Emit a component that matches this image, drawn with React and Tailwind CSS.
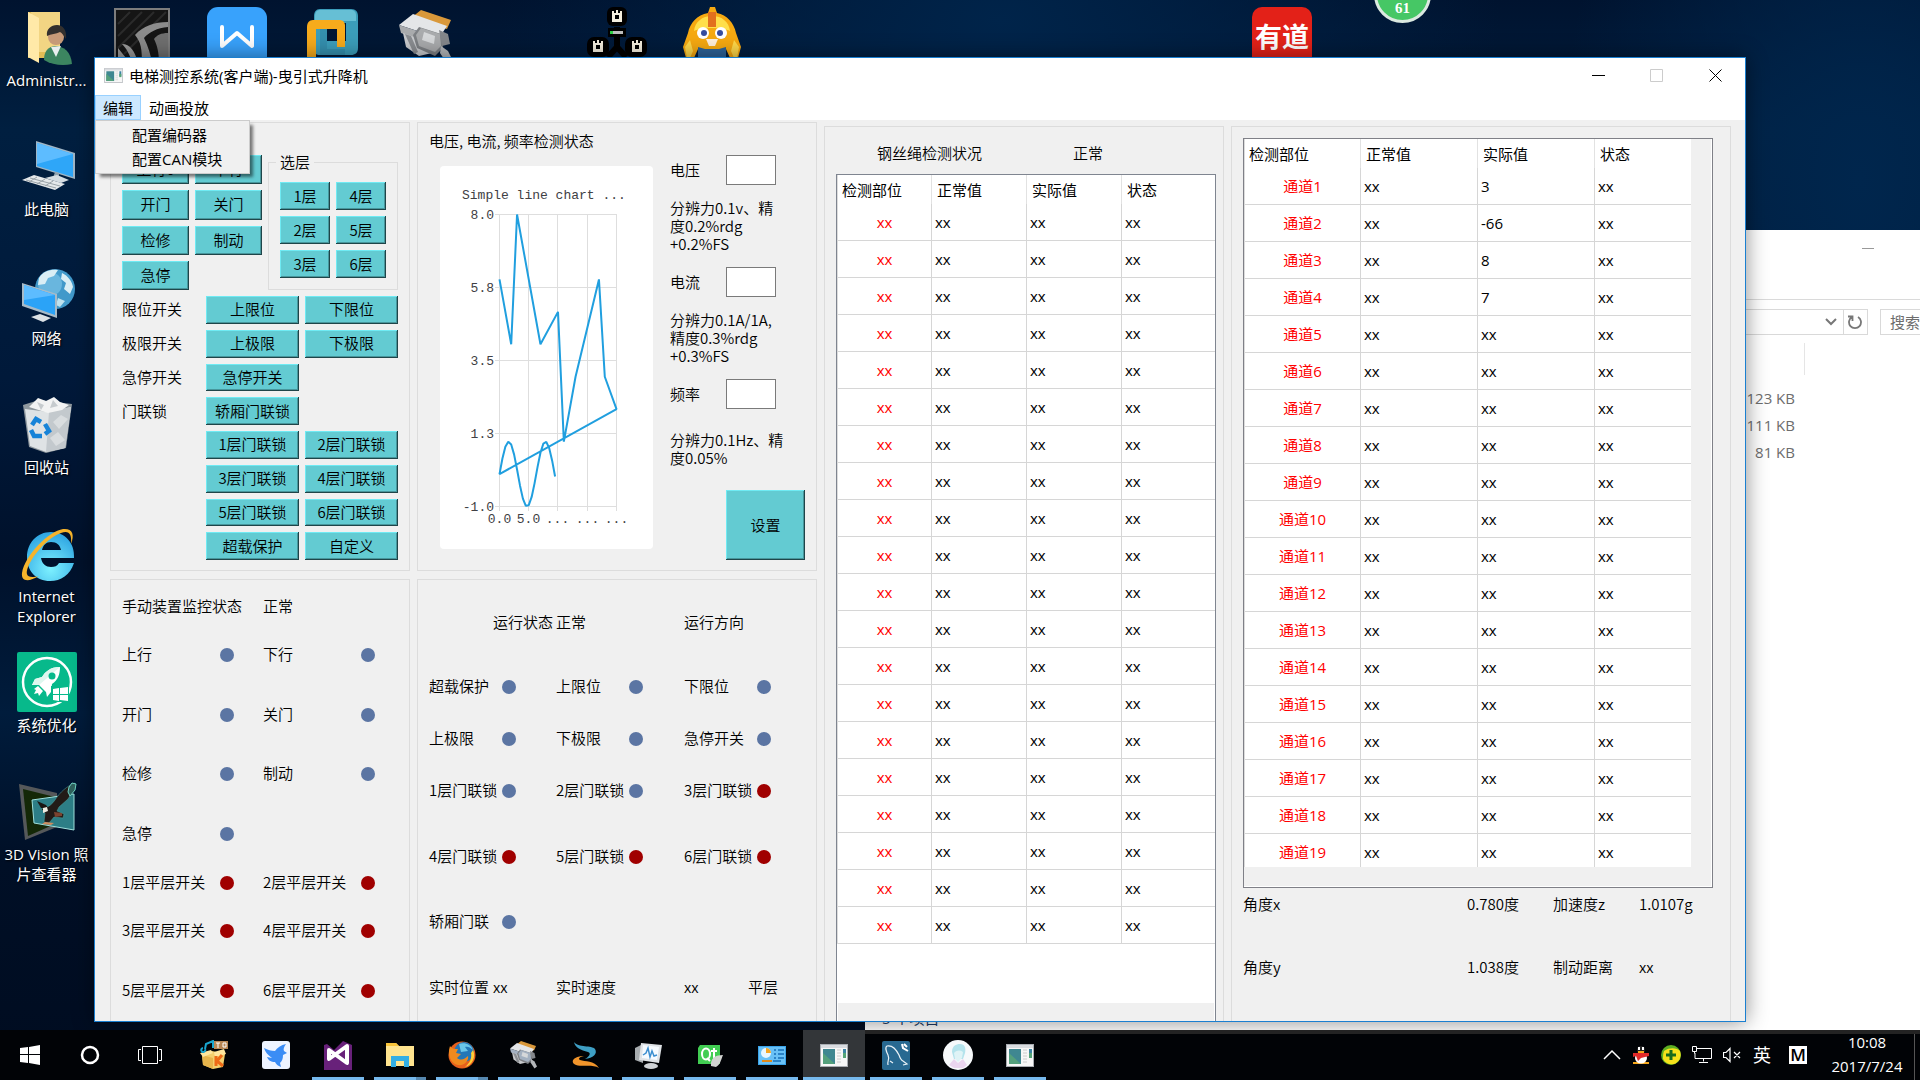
import React from "react";

const SONG = "font-['Noto_Sans_CJK_SC','Noto_Sans',sans-serif] font-[350]";
const UI = "font-['Open_Sans','Noto_Sans_CJK_SC',sans-serif]";

/* ---------- desktop icons ---------- */

const UserFolderIcon = () => (
  <svg width="60" height="60" viewBox="0 0 60 60" className="block">
    <path d="M11 5h32v46H11z" fill="#e3bd56" />
    <path d="M14 5h29v40H20z" fill="#f2d583" />
    <path d="M11 5l11 6v45l-11-6z" fill="#ffe9a8" />
    <path d="M27 53c0-9 4-13 11-14 9 0 16 6 17 18-9 2-20 1-28-4z" fill="#3c8560" />
    <path d="M34 40l5 10 5-11z" fill="#e9eef0" />
    <circle cx="39" cy="30" r="8" fill="#c79a78" />
    <path d="M30 29c-1-7 4-11 10-11s10 5 9 14c-2-3-4-6-6-7-4 2-9 2-13 4z" fill="#33302e" />
  </svg>
);

const ComputerIcon = () => (
  <svg width="60" height="60" viewBox="0 0 60 60" className="block">
    <path d="M19 5l39 12v26L19 31z" fill="#9fb6c6" />
    <path d="M20 7l36 11v23L20 30z" fill="#2ea6f8" />
    <path d="M20 7l36 11-36 10z" fill="#5dbcff" />
    <path d="M38 36l4 1v6l-6-1z" fill="#8fa1ad" />
    <path d="M28 42l12-3 12 5-8 3z" fill="#d5dde2" />
    <path d="M5 44l12-5 31 9-10 6z" fill="#e4e8ea" />
    <path d="M9 44l30 8M13 42l30 8M12 46l8-5M20 48l8-5M28 50l8-5" stroke="#9aa3a8" strokeWidth="1" />
  </svg>
);

const NetworkIcon = () => (
  <svg width="60" height="60" viewBox="0 0 60 60" className="block">
    <circle cx="38" cy="24" r="20" fill="#4199ca" />
    <circle cx="33" cy="19" r="12" fill="#69b6de" />
    <path d="M22 13c5-8 13-9 19-8l-4 6-6 2-3 6-7 1zM45 8c6 3 10 8 11 14l-3 7-6-5 2-6-5-4z" fill="#d9eef5" />
    <path d="M41 33l7 3-5 6-4-2z" fill="#bfe2ee" />
    <path d="M5 18l35 11v24L5 41z" fill="#a7bac7" />
    <path d="M7 20l31 10v20L7 39z" fill="#2ba3f7" />
    <path d="M7 20l31 10L7 35z" fill="#5dbcff" />
    <path d="M14 52l9-3 11 4-8 4z" fill="#dce2e6" />
  </svg>
);

const BinIcon = () => (
  <svg width="60" height="60" viewBox="0 0 60 60" className="block">
    <path d="M6 11l16-5 33 4-6 44-20 5-17-6z" fill="#8f989e" />
    <path d="M8 15l24 3 22-5-6 41-19 4-16-6z" fill="#dfe3e5" />
    <path d="M32 18l22-5-6 41-19 4z" fill="#c3c9cd" />
    <path d="M12 13l9-9 8 3 8-4 6 5 9 3-7 5-14 3z" fill="#f2f3f3" />
    <path d="M20 8l7 3-3 5zM36 6l5 6-8 2z" fill="#c6cbce" />
    <path d="M36 28l8-7 7 4-9 10zM33 44l8-6 7 8-9 6z" fill="#d9dddf" />
    <g fill="none" stroke="#1683d8" strokeWidth="4.500">
      <path d="M15 31l4-6 5 3" />
      <path d="M28 30l4 7-4 3" />
      <path d="M25 42h-8l-3-6" />
    </g>
  </svg>
);

const ExplorerEIcon = () => (
  <svg width="60" height="60" viewBox="0 0 60 60" className="block">
    <defs>
      <radialGradient id="ieg" cx="0.5" cy="0.75" r="0.8">
        <stop offset="0" stopColor="#7df1ff" />
        <stop offset="1" stopColor="#289fe0" />
      </radialGradient>
    </defs>
    <path
      d="M34 9c14 0 24 11 23 26H24c1 6 5 9 10 9 4 0 6-1 8-4h15c-4 12-13 18-24 18C19 58 10 48 10 34S20 9 34 9zm-9 18h19c-1-5-4-8-10-8-5 0-8 3-9 8z"
      fill="url(#ieg)"
    />
    <path
      d="M54 21C58 11 55 5 46 6 32 8 8 32 5 50c-1 9 7 9 17 3C10 56 8 52 11 44 17 30 32 14 44 10c8-3 11 1 10 11z"
      fill="#f5b32b"
    />
  </svg>
);

const RocketIcon = () => (
  <svg width="60" height="60" viewBox="0 0 60 60" className="block">
    <rect width="60" height="60" rx="2" fill="#07b98b" />
    <circle cx="30" cy="30" r="24" fill="none" stroke="#fff" strokeWidth="2.5" />
    <path d="M43 15c-10 0-15 5-18 10l-7 2-3 6h7l7 7 1 5 4-5 1-8c6-4 8-10 8-17z" fill="#fff" />
    <path d="M43 15c-10 0-15 5-18 10l-7 2-3 6h7z" fill="#dff7ef" />
    <circle cx="35" cy="24" r="3.5" fill="#07b98b" />
    <path d="M21 34l-4 3 2 1-2 4 4-1 1 3 4-5z" fill="#fff" />
    <path d="M34 34h18v16H34z" fill="#07b98b" />
    <path d="M36 37l6-1v6h-6zM43 36l8-1v7h-8zM36 43h6v6l-6-1zM43 43h8v6l-8-1z" fill="#fff" />
  </svg>
);

const EagleIcon = () => (
  <svg width="60" height="60" viewBox="0 0 60 60" className="block">
    <path d="M2 3l38 9v34L8 59z" fill="#55585a" />
    <path d="M6 8l32 8v27L11 55z" fill="#142807" />
    <path d="M15 19l42-6v36l-40-7z" fill="#2d7e86" stroke="#9fe0dc" strokeWidth="1" />
    <path d="M28 27c5-2 7-4 10-8 5-8 12-14 20-17l-2 8-5 8-9 8-2 4 7 3-1 4-9-1-5 6-5-1 1-9-4-4z" fill="#221b17" stroke="#4da39f" strokeWidth="0.500" />
    <path d="M32 28l-8-1-4-7 9 4z" fill="#1b1512" />
    <path d="M26 27l4-1 1 4-5 2z" fill="#f0ece0" />
    <path d="M52 6l3-4 4 1-1 6-5 6-2-4z" fill="#2f625d" stroke="#71d3c4" strokeWidth="1" />
    <path d="M37 31l8 1v3l-7 1z" fill="#7b4330" />
    <path d="M28 41l9 1-3 2-9-1z" fill="#cf8b5d" />
  </svg>
);

const NvidiaIcon = () => (
  <svg width="56" height="56" viewBox="0 0 56 56" className="block">
    <rect x="1" y="1" width="54" height="54" fill="#151515" stroke="#7d7d7d" strokeWidth="2" />
    <path d="M4 16L16 4M4 28L28 4M4 40L40 4M10 46L52 4" stroke="#2b2b2b" strokeWidth="2" />
    <path d="M54 14c-14 0-25 4-33 13 6 7 7 14 7 29h10c-1-9-4-18-8-26 5-6 13-10 24-11z" fill="#8b8b8b" />
    <path d="M54 25c-7 0-11 2-14 6 3 6 5 13 5 24h9z" fill="#6f6f6f" />
    <path d="M4 40l12 15H4zM8 36c8 0 13 7 16 19h-6c-2-8-5-14-10-19z" fill="#999" />
  </svg>
);

const WpsIcon = () => (
  <svg width="60" height="60" viewBox="0 0 60 60" className="block">
    <rect width="60" height="60" rx="11" fill="#38a2fc" />
    <path d="M15 20v19l15-13 15 13V20" fill="none" stroke="#fff" strokeWidth="4" strokeLinejoin="round" strokeLinecap="round" />
  </svg>
);

const VmIcon = () => (
  <svg width="52" height="50" viewBox="0 0 52 50" className="block">
    <path d="M13 0h31c5 0 7 3 7 7v32c0 5-3 7-7 7H13c-4 0-6-2-6-6V7c0-4 2-7 6-7zm7 14v18h19V14z" fill="#3b9dba" fillRule="evenodd" />
    <path d="M13 1h31c3 0 5 2 5 5v6H8V7c0-4 2-6 5-6z" fill="#66bfd5" />
    <path d="M6 11h26c4 0 6 2 6 6v21H30V20H9v30H0V18c0-4 2-7 6-7z" fill="#f7ab1c" />
    <path d="M13 20h7v20h18v6H13z" fill="#348fae" />
  </svg>
);

const PlugIcon = ({ size = 60, tone = "#a9abad" }) => (
  <svg width={size} height={size} viewBox="0 0 60 60" className="block">
    <path d="M14 10l10-8 30 10-4 9z" fill="#d9983a" />
    <path d="M2 17l14-11 34 12-8 12z" fill="#e4e6e8" />
    <path d="M2 17l40 13-3 8L4 25z" fill={tone} />
    <path d="M6 25l31 11-2 9-13 3-13-9z" fill="#c8cacd" />
    <path d="M22 19l22 7 2 14-8 8-18-8-4-13z" fill="#7d8084" />
    <path d="M24 20l19 6 1 12-6 6-16-6-3-11z" fill={tone} />
    <path d="M27 24l11 4-1 8-12-4z" fill="#d6d8da" />
    <path d="M42 22l9 4 2 10-8 2z" fill="#84878b" />
    <path d="M44 38l7 5 5 10-5 4-8-12z" fill="#b3b6b9" />
    <path d="M8 26l9 20 4-2-7-16z" fill="#8a8d91" />
  </svg>
);

const RobotsIcon = () => (
  <svg width="62" height="52" viewBox="0 0 62 52" className="block">
    <path d="M31 20v20M31 40l-9 10M31 40l9 10" stroke="#000" strokeWidth="6" />
    <rect x="21" y="0" width="20" height="19" rx="6" fill="#000" />
    <rect x="1" y="30" width="22" height="20" rx="7" fill="#000" />
    <rect x="39" y="30" width="22" height="20" rx="7" fill="#000" />
    <rect x="22" y="21" width="18" height="9" fill="#000" />
    <path d="M24 24h13v3H24z" fill="#bdbdbd" />
    <path d="M24 24h3v3h-3z" fill="#2fd046" />
    <g fill="#f4eede">
      <path d="M26 4h2v2h2V3h2v3h2V4h2v11H26zM29 8v4h4V8z" fillRule="evenodd" />
      <path d="M7 34h2v2h2v-3h2v3h2v-2h2v11H7zM10 38v4h4v-4z" fillRule="evenodd" />
      <path d="M46 34h2v2h2v-3h2v3h2v-2h2v11H46zM49 38v4h4v-4z" fillRule="evenodd" />
    </g>
  </svg>
);

const MascotIcon = () => (
  <svg width="60" height="52" viewBox="0 0 60 52" className="block">
    <path d="M28 0h5l2 6c10 2 17 10 19 20l5 14-3 11h-8l-4-9H16l-4 9H4L1 40l5-14C8 16 15 8 26 6z" fill="#f6a911" />
    <path d="M12 24c1-9 8-15 18-15s17 6 18 15c-8-4-28-4-36 0z" fill="#ffdf4a" />
    <path d="M26 5h8v15h-8z" fill="#e2701e" />
    <path d="M16 40l7 2h14l7-2v12H16z" fill="#2d6399" />
    <circle cx="21" cy="26" r="6" fill="#fff" />
    <circle cx="39" cy="26" r="6" fill="#fff" />
    <circle cx="22" cy="26" r="3" fill="#364c9e" />
    <circle cx="38" cy="26" r="3" fill="#364c9e" />
    <path d="M24 32h12l-3 7h-6z" fill="#fff0dc" />
    <path d="M3 40l5-7 3 11-3 7H5zM57 40l-5-7-3 11 3 7h3z" fill="#ffd84a" />
  </svg>
);

/* ---------- taskbar icons ---------- */

const AppWindowIcon = ({ w = 28, h = 23 }) => (
  <svg width={w} height={h} viewBox="0 0 28 23" className="block">
    <rect x="0.5" y="0.5" width="27" height="22" fill="#f7f7f7" stroke="#a9adb2" />
    <path d="M1 1h26v3H1z" fill="#d9dce0" />
    <rect x="3" y="5" width="12" height="15" fill="#3f8791" />
    <path d="M3 20V9l12 11z" fill="#54a07c" />
    <path d="M17 6h4M17 9h4M17 12h4M17 15h4M17 18h4" stroke="#ccc" />
    <rect x="23" y="5" width="3" height="8" fill="#3b84a4" />
    <rect x="23" y="9" width="3" height="5" fill="#55a376" />
  </svg>
);

const TASKS = [
  {
    name: "音乐盒",
    bar: 0,
    icon: (
      <svg width="30" height="30" viewBox="0 0 30 30">
        <path d="M3 15l10-4 13 3-2 13-10 2-10-4z" fill="#f4cf6d" />
        <path d="M3 15l11 3v11L4 25z" fill="#e7b54c" />
        <path d="M1 13l11-3 2 3-10 4zM15 12l10-3 2 5-11 3z" fill="#ffe69d" />
        <path d="M17 16v10M18 21l5-6M18 21l6 5" stroke="#ee6a16" strokeWidth="3" />
        <path d="M6 9l1-5 7-3v7M6 9a2 2 0 1 1-2-1" stroke="#19a6cf" strokeWidth="2" fill="none" />
        <rect x="15" y="1" width="14" height="8" fill="#b98755" />
        <path d="M17 3h4M19 3v5M24 3h3v4h-3z" stroke="#fff" strokeWidth="1" fill="none" />
      </svg>
    ),
  },
  {
    name: "迅雷",
    bar: 0,
    icon: (
      <svg width="28" height="28" viewBox="0 0 28 28">
        <rect width="28" height="28" rx="3" fill="#eef4ff" />
        <path d="M2 7c4 2 7 3 11 3 2-3 6-6 11-7-2 3-3 5-2 7l3 2-4 2c0 4-1 6-3 8l1 4c-3-1-5-3-6-5-4 0-7-2-8-5l5 1C6 14 3 11 2 7z" fill="#3b8df5" />
      </svg>
    ),
  },
  {
    name: "Visual Studio",
    bar: 1,
    icon: (
      <svg width="28" height="29" viewBox="0 0 28 29">
        <path d="M0 4l3-1 7 6 9-9 9 4v25H0z" fill="#68217a" />
        <path d="M5 9l18 13V5L5 18z" fill="none" stroke="#fff" strokeWidth="4" strokeLinejoin="round" />
      </svg>
    ),
  },
  {
    name: "文件资源管理器",
    bar: 2,
    icon: (
      <svg width="28" height="24" viewBox="0 0 28 24">
        <path d="M0 0h10l3 3h15v20H0z" fill="#ffe48f" />
        <path d="M0 0h10l3 3H0z" fill="#f9c43a" />
        <path d="M5 24V13h18v11h-5v-6h-8v6z" fill="#33aee4" />
      </svg>
    ),
  },
  {
    name: "Firefox",
    bar: 2,
    icon: (
      <svg width="28" height="28" viewBox="0 0 28 28">
        <circle cx="14" cy="14" r="13.5" fill="#e8601c" />
        <circle cx="16" cy="11" r="10" fill="#2377b8" />
        <path d="M11 3c5-2 12 0 14 6-3-3-6-4-8-3l3 4-7 1z" fill="#6ac5e8" />
        <path d="M2 5c2 3 5 3 8 3l-2 4 5 1-4 4c4 3 8 1 11-2 1 5-4 10-10 9C3 23-1 14 2 5z" fill="#f08a1f" />
        <path d="M25 9c3 6 0 15-8 17 5-4 7-9 6-14z" fill="#ffcf37" />
      </svg>
    ),
  },
  { name: "串口工具", bar: 1, icon: <PlugIcon size={30} tone="#a3b0c0" /> },
  {
    name: "SecureCRT",
    bar: 1,
    icon: (
      <svg width="28" height="28" viewBox="0 0 28 28">
        <path d="M2 1c4 6 18 3 21 7 3 5-2 9-10 10 5-3 6-6 3-7C9 9 3 7 2 1z" fill="#3e9fc4" />
        <path d="M12 15c-5 1-6 3-4 4 5 2 14 0 19 8-6-4-16-1-23-3-7-3-2-9 8-9z" fill="#f1952b" />
      </svg>
    ),
  },
  {
    name: "监视器",
    bar: 1,
    icon: (
      <svg width="28" height="28" viewBox="0 0 28 28">
        <path d="M1 7l8-4v19l-8-3z" fill="#a7acaf" />
        <path d="M7 2l21 2-3 18L5 19z" fill="#dfe3e6" />
        <path d="M9 4l16 2-2 13L8 17z" fill="#f6fbff" />
        <path d="M9 14l3-2 2-5 2 9 2-6 2 5 3-1" fill="none" stroke="#3c8fd0" strokeWidth="1.5" />
        <ellipse cx="17" cy="25" rx="7" ry="3" fill="#cfd3d6" />
      </svg>
    ),
  },
  {
    name: "Qt Creator",
    bar: 1,
    icon: (
      <svg width="28" height="26" viewBox="0 0 28 26">
        <path d="M4 3h20v19H2V6z" fill="#41cd52" />
        <ellipse cx="10" cy="12" rx="4" ry="5.5" fill="none" stroke="#fff" strokeWidth="2" />
        <path d="M11 16l3 3M18 6v9c0 2 1 2 3 2M15 9h6" fill="none" stroke="#fff" strokeWidth="2" />
        <path d="M27 13c-7 0-13 3-12 11l5 1c4-2 5-7 7-12z" fill="#d2d4d2" />
      </svg>
    ),
  },
  {
    name: "控制面板",
    bar: 1,
    icon: (
      <svg width="28" height="19" viewBox="0 0 28 19">
        <rect width="28" height="19" fill="#3aa4ea" />
        <rect x="1" y="1" width="26" height="17" fill="#69c1f6" />
        <circle cx="8" cy="7" r="5" fill="#e8f6ff" />
        <path d="M8 7V2a5 5 0 0 1 5 5z" fill="#f5a623" />
        <path d="M16 4h2M16 8h2M16 12h2M20 4h6M20 8h6M20 12h6" stroke="#176fb8" strokeWidth="1.5" />
        <path d="M4 15h10" stroke="#e18a1a" strokeWidth="2" />
        <path d="M15 15h8" stroke="#176fb8" strokeWidth="1.5" />
      </svg>
    ),
  },
  { name: "电梯测控系统", bar: 3, icon: <AppWindowIcon /> },
  {
    name: "MySQL Workbench",
    bar: 1,
    icon: (
      <svg width="28" height="29" viewBox="0 0 28 29">
        <rect width="28" height="29" rx="2" fill="#286991" />
        <path d="M6 24c-1-5 2-5 0-10-2-4-3-8-1-9 5-1 9 3 12 9 1 3 2 5 4 6l4 3-4 1M8 20l3 2" fill="none" stroke="#e9f2f7" strokeWidth="1.200" />
        <path d="M20 3l1 4 5 3M22 3l3 3" stroke="#fff" strokeWidth="2" fill="none" />
      </svg>
    ),
  },
  {
    name: "头像",
    bar: 1,
    icon: (
      <svg width="30" height="30" viewBox="0 0 30 30">
        <circle cx="15" cy="15" r="15" fill="#f6f9fb" />
        <path d="M9 12c0-6 4-8 8-8 5 0 6 4 5 9l-2 6H11z" fill="#b4e3ec" />
        <path d="M11 13c3-3 6-3 9-1l-1 6-4 4-3-3z" fill="#dff3f6" />
        <path d="M6 25l5-6 4 4 5-4 4 6-4 3h-9z" fill="#ead5ef" />
      </svg>
    ),
  },
  { name: "动画投放", bar: 1, icon: <AppWindowIcon /> },
];

function TaskButton({ task }) {
  const active = task.bar === 3;
  return (
    <button
      type="button"
      aria-label={task.name}
      className={`relative flex h-full w-[62px] items-center justify-center ${active ? "bg-[#333639]" : ""}`}
    >
      {task.icon}
      {task.bar === 1 && <span className="absolute inset-x-[5px] bottom-0 h-[3px] bg-[#76b9ed]" />}
      {task.bar === 2 && (
        <span className="absolute inset-x-[5px] bottom-0 h-[3px] border-r-[10px] border-[#5688b0] bg-[#76b9ed]" />
      )}
      {active && <span className="absolute inset-x-0 bottom-0 h-[3px] bg-[#76b9ed]" />}
    </button>
  );
}

function Taskbar() {
  return (
    <footer className={`absolute inset-x-0 bottom-0 z-20 flex h-[50px] bg-[#010306] text-white ${UI}`}>
      <div className="absolute top-0 right-0 left-[865px] h-1 bg-[#232323]" />
      <button type="button" aria-label="开始" className="flex w-[60px] items-center justify-center">
        <svg width="20" height="20" viewBox="0 0 20 20" fill="#fff">
          <path d="M0 3l8-1v7H0zM9 2l11-2v9H9zM0 10h8v8l-8-1zM9 10h11v10L9 18z" />
        </svg>
      </button>
      <button type="button" aria-label="Cortana" className="flex w-[60px] items-center justify-center">
        <svg width="20" height="20" viewBox="0 0 20 20">
          <circle cx="10" cy="10" r="8" fill="none" stroke="#fff" strokeWidth="2.5" />
        </svg>
      </button>
      <button type="button" aria-label="任务视图" className="mr-[3px] flex w-[60px] items-center justify-center">
        <svg width="24" height="18" viewBox="0 0 24 18" fill="none" stroke="#fff" strokeWidth="1">
          <path d="M4.500 0.500h15v17h-15zM3 3.500H0.500v11H3M21 3.500h2.500v11H21" />
        </svg>
      </button>
      {TASKS.map((t) => (
        <TaskButton key={t.name} task={t} />
      ))}
      <div className="ml-auto flex items-center">
        <div className="flex items-center gap-[11px]">
          <svg width="18" height="18" viewBox="0 0 18 18" fill="none" stroke="#fff" strokeWidth="1.5">
            <path d="M1 13l8-8 8 8" />
          </svg>
          <svg width="18" height="18" viewBox="0 0 18 18">
            <path d="M1 16h16v2H1z" fill="#f6a81c" />
            <ellipse cx="9" cy="12" rx="6" ry="5.500" fill="#fff" />
            <circle cx="9" cy="4" r="4" fill="#222" />
            <path d="M6 1h2v3H6zM10 1h2v3h-2z" fill="#fff" />
            <path d="M6 5h6v2H6z" fill="#f6a81c" />
            <path d="M1 7h16v3l-8 2-3 3-2-5-3 1z" fill="#e22a2a" />
          </svg>
          <svg width="20" height="20" viewBox="0 0 20 20">
            <circle cx="10" cy="10" r="10" fill="#5cae22" />
            <path d="M3 6c6-4 13-3 16 0 2 6-1 11-6 13-5 1-9-1-11-5 0-3 0-5 1-8z" fill="#f6e21c" />
            <path d="M10 5v10M5 10h10" stroke="#186a1d" strokeWidth="3" />
          </svg>
          <svg width="20" height="18" viewBox="0 0 20 18" fill="none" stroke="#fff">
            <path d="M5 2.500h14.500v10H3V7M11.500 12.500v3M7 16.500h9M0.500 0.500h4v5h-4zM2.500 5.500v2" />
          </svg>
          <svg width="18" height="16" viewBox="0 0 18 16" fill="none" stroke="#fff" strokeWidth="1.200">
            <path d="M0.500 5.500h2.500l4-4v13l-4-4H0.500zM11 5l6 6M17 5l-6 6" />
          </svg>
        </div>
        <span className="ml-3 w-[20px] text-[18px] leading-[24px]">英</span>
        <span className="ml-4 flex h-[18px] w-[18px] items-center justify-center bg-white text-[17px] leading-[18px] font-semibold text-black">
          M
        </span>
        <div className="ml-[22px] w-[76px] pb-0.5 text-center text-[15px] leading-6 whitespace-nowrap">
          <div>10:08</div>
          <div>2017/7/24</div>
        </div>
        <div className="ml-[9px] h-[50px] w-1.5 border-l border-[#555]" />
      </div>
    </footer>
  );
}

/* ---------- desktop ---------- */

const DESKTOP = [
  { label: ["Administr..."], icon: <UserFolderIcon /> },
  { label: ["此电脑"], icon: <ComputerIcon /> },
  { label: ["网络"], icon: <NetworkIcon /> },
  { label: ["回收站"], icon: <BinIcon /> },
  { label: ["Internet", "Explorer"], icon: <ExplorerEIcon /> },
  { label: ["系统优化"], icon: <RocketIcon /> },
  { label: ["3D Vision 照", "片查看器"], icon: <EagleIcon /> },
];

function DesktopIcons() {
  return (
    <div className={`flex w-[93px] flex-col pt-[7px] text-[15px] leading-[20px] text-white ${UI}`}>
      {DESKTOP.map((d) => (
        <div key={d.label[0]} className="flex h-[129px] flex-col items-center whitespace-nowrap">
          {d.icon}
          <div className="mt-[3px] text-center [text-shadow:1px_1px_2px_#000]">
            {d.label.map((l) => (
              <div key={l}>{l}</div>
            ))}
          </div>
        </div>
      ))}
    </div>
  );
}

function TopShortcuts() {
  return (
    <>
      <div className="absolute top-[8px] left-[114px]"><NvidiaIcon /></div>
      <div className="absolute top-[7px] left-[207px]"><WpsIcon /></div>
      <div className="absolute top-[9px] left-[307px]"><VmIcon /></div>
      <div className="absolute top-[8px] left-[397px]"><PlugIcon /></div>
      <div className="absolute top-[7px] left-[586px]"><RobotsIcon /></div>
      <div className="absolute top-[7px] left-[682px]"><MascotIcon /></div>
      <div className="absolute top-[7px] left-[1252px] flex h-[60px] w-[60px] justify-center rounded-[10px] bg-[#e32118] pt-[14px] font-['Noto_Sans_CJK_SC',sans-serif] text-[27px] leading-[30px] font-bold text-white">
        有道
      </div>
      <div className="absolute top-[-34px] left-[1374px] flex h-[57px] w-[57px] items-end justify-center rounded-full border-[3px] border-[#dbe9e0] bg-[#46c765] pb-[4px] font-['Liberation_Serif',serif] text-[15px] leading-[16px] font-bold text-white">
        61
      </div>
    </>
  );
}

function ExplorerWindow() {
  return (
    <section className={`absolute top-[230px] right-0 bottom-[50px] left-[865px] flex flex-col overflow-hidden bg-white text-[15px] text-[#6d6d6d] ${UI}`}>
      <div className="flex h-[70px] items-start justify-end border-b border-[#dadada] pt-[18px] pr-[46px]">
        <button type="button" aria-label="最小化" className="h-px w-3 bg-[#999]" />
      </div>
      <div className="flex h-[43px] items-center justify-end gap-3">
        <div className="flex h-[26px] w-[400px] justify-end border border-[#d9d9d9]">
          <button type="button" aria-label="展开" className="flex w-6 items-center justify-center">
            <svg width="12" height="8" viewBox="0 0 12 8" fill="none" stroke="#777" strokeWidth="2">
              <path d="M1 1l5 5 5-5" />
            </svg>
          </button>
          <button type="button" aria-label="刷新" className="flex w-6 items-center justify-center border-l border-[#d9d9d9]">
            <svg width="15" height="16" viewBox="0 0 15 16" fill="none" stroke="#777" strokeWidth="1.800">
              <path d="M10 3a6 6 0 1 1-6 0M4.500 7V2.500H0" />
            </svg>
          </button>
        </div>
        <div className="h-[26px] w-[40px] overflow-hidden border border-r-0 border-[#d9d9d9] pl-[9px] leading-[24px] whitespace-nowrap">
          搜索
        </div>
      </div>
      <div className="mr-[115px] h-[32px] w-px self-end bg-[#e5e5e5]" />
      <div className="mt-[10px] mr-[125px] flex flex-col text-right leading-[27px]">
        <span>123 KB</span>
        <span>111 KB</span>
        <span>81 KB</span>
      </div>
      <div className="mt-auto pb-[2px] pl-[17px] leading-[20px] text-[#1e3c64]">5 个项目</div>
    </section>
  );
}

/* ---------- application ---------- */

function Btn({ children, className = "" }) {
  return (
    <button
      type="button"
      className={`flex items-center justify-center bg-[#63cbd2] pb-0.5 leading-none whitespace-nowrap shadow-[inset_-1px_-1px_#1f4549,inset_1px_1px_#6feaf3,inset_-2px_-2px_#47969c] ${className}`}
    >
      {children}
    </button>
  );
}

function Panel({ children, className = "" }) {
  return <section className={`border border-[#dcdcdc] ${className}`}>{children}</section>;
}

const SWITCH_ROWS = [
  ["限位开关", "上限位", "下限位"],
  ["极限开关", "上极限", "下极限"],
  ["急停开关", "急停开关", null],
  ["门联锁", "轿厢门联锁", null],
  ["", "1层门联锁", "2层门联锁"],
  ["", "3层门联锁", "4层门联锁"],
  ["", "5层门联锁", "6层门联锁"],
  ["", "超载保护", "自定义"],
];

function ControlPanel() {
  return (
    <Panel className="flex h-[449px] flex-col px-[11px] pt-[32px] pb-[10px]">
      <div className="flex h-[135px] gap-1.5">
        <div className="grid flex-1 grid-cols-2 grid-rows-4 gap-1.5">
          <Btn>上行0</Btn>
          <Btn>下行</Btn>
          <Btn>开门</Btn>
          <Btn>关门</Btn>
          <Btn>检修</Btn>
          <Btn>制动</Btn>
          <Btn>急停</Btn>
        </div>
        <fieldset className="w-[130px] border border-[#dcdcdc] px-[7px] pb-[10px]">
          <legend className="px-1 leading-[14px]">选层</legend>
          <div className="grid grid-flow-col grid-cols-2 grid-rows-3 gap-1.5 px-1 pt-[13px]">
            {["1层", "2层", "3层", "4层", "5层", "6层"].map((f) => (
              <Btn key={f} className="h-[28px]">{f}</Btn>
            ))}
          </div>
        </fieldset>
      </div>
      <div className="mt-1.5 grid flex-1 grid-cols-[78px_1fr_1fr] grid-rows-8 gap-1.5">
        {SWITCH_ROWS.map(([label, a, b]) => (
          <React.Fragment key={a}>
            <span className="self-center pb-0.5 leading-none">{label}</span>
            <Btn>{a}</Btn>
            {b ? <Btn>{b}</Btn> : <span />}
          </React.Fragment>
        ))}
      </div>
    </Panel>
  );
}

const GRID_X = [59.5, 88.5, 117.5, 147.5, 176.5];
const GRID_Y = [48.5, 121.5, 194.5, 267.5, 340.5];
const LINE_POINTS = [[0, 6], [2, 4], [3, 8], [7, 4], [10, 5], [11, 1], [13, 3], [17, 6], [18, 3], [20, 2]];
const toX = (v) => 59.5 + v * 5.85;
const toY = (v) => 340.5 - (v + 1) * 32.44;

function Chart() {
  const pts = [...LINE_POINTS];
  for (let x = 0; x <= 9.5; x += 0.5) pts.push([x, Math.sin(x)]);
  const line = pts.map(([x, y]) => `${toX(x)},${toY(y)}`).join(" ");
  return (
    <div className="h-[383px] flex-1 rounded bg-white">
      <svg viewBox="0 0 213 383" className="block h-full w-full font-['Liberation_Mono',monospace] text-[13px]" fill="#404044">
        <text x="22" y="33">Simple line chart ...</text>
        <g stroke="#dedede" strokeWidth="1" shapeRendering="crispEdges">
          {GRID_X.map((x) => <path key={x} d={`M${x} 48V345`} />)}
          {GRID_Y.map((y) => <path key={y} d={`M55 ${y}H177`} />)}
        </g>
        <g textAnchor="end">
          {["8.0", "5.8", "3.5", "1.3", "-1.0"].map((t, i) => (
            <text key={t} x="54" y={GRID_Y[i] + 4}>{t}</text>
          ))}
        </g>
        <g textAnchor="middle">
          {["0.0", "5.0", "...", "...", "..."].map((t, i) => (
            <text key={i} x={GRID_X[i]} y="357">{t}</text>
          ))}
        </g>
        <polyline points={line} fill="none" stroke="#209fdf" strokeWidth="2" strokeLinejoin="bevel" />
      </svg>
    </div>
  );
}

function Reading({ id, label }) {
  return (
    <div className="flex h-[30px] items-center">
      <label htmlFor={id} className="w-[56px] pb-px">{label}</label>
      <input id={id} type="text" className="h-[30px] w-[50px] border border-[#7a7a7a] bg-white px-1" />
    </div>
  );
}

function ElectricPanel() {
  return (
    <Panel className="flex h-[449px] gap-[17px] pr-[11px] pl-[11px]">
      <div className="flex flex-1 flex-col">
        <h2 className="pt-[8px] leading-[20px] whitespace-nowrap">电压, 电流, 频率检测状态</h2>
        <div className="mt-[15px] ml-[11px] flex"><Chart /></div>
      </div>
      <div className="flex w-[135px] flex-col pt-[32px] leading-[18px] whitespace-nowrap">
        <Reading id="voltage" label="电压" />
        <p className="mt-[14px]">分辨力0.1v、精<br />度0.2%rdg<br />+0.2%FS</p>
        <div className="mt-[14px]"><Reading id="current" label="电流" /></div>
        <p className="mt-[14px]">分辨力0.1A/1A,<br />精度0.3%rdg<br />+0.3%FS</p>
        <div className="mt-[14px]"><Reading id="frequency" label="频率" /></div>
        <p className="mt-[22px]">分辨力0.1Hz、精<br />度0.05%</p>
        <Btn className="mt-[23px] h-[70px] w-[79px] self-end">设置</Btn>
      </div>
    </Panel>
  );
}

function Lamp({ label, red, className }) {
  return (
    <div className={`flex items-center justify-between whitespace-nowrap ${className}`}>
      <span className="pb-0.5">{label}</span>
      <span className={`h-[14px] w-[14px] rounded-full ${red ? "bg-[#a00000]" : "bg-[#5b75a3]"}`} />
    </div>
  );
}

const MANUAL = [
  ["上行"], ["下行"], ["开门"], ["关门"], ["检修"], ["制动"], ["急停"], null,
  ["1层平层开关", 1], ["2层平层开关", 1], ["3层平层开关", 1], ["4层平层开关", 1], ["5层平层开关", 1], ["6层平层开关", 1],
];

function ManualPanel() {
  return (
    <Panel className="grid grid-cols-[141px_1fr] grid-rows-[36px_61px_59px_60px_60px_38px_58px_62px] items-center border-b-0 pt-[8px] pl-[11px] whitespace-nowrap">
      <span>手动装置监控状态</span>
      <span>正常</span>
      {MANUAL.map((m, i) => (m ? <Lamp key={i} label={m[0]} red={m[1]} className="w-[112px]" /> : <span key={i} />))}
    </Panel>
  );
}

const RUNNING = [
  ["超载保护"], ["上限位"], ["下限位"],
  ["上极限"], ["下极限"], ["急停开关"],
  ["1层门联锁"], ["2层门联锁"], ["3层门联锁", 1],
  ["4层门联锁", 1], ["5层门联锁", 1], ["6层门联锁", 1],
];

function RunPanel() {
  return (
    <Panel className="grid grid-cols-[64px_63px_64px_64px_64px_1fr] grid-rows-[67px_63px_42px_62px_70px_60px_70px] items-center border-b-0 pt-[8px] pl-[11px] whitespace-nowrap">
      <span className="col-start-2">运行状态</span>
      <span className="col-span-2">正常</span>
      <span className="col-span-2">运行方向</span>
      {RUNNING.map((m) => (
        <Lamp key={m[0]} label={m[0]} red={m[1]} className="col-span-2 w-[87px]" />
      ))}
      <Lamp label="轿厢门联" className="col-span-6 w-[87px]" />
      <span>实时位置</span>
      <span>xx</span>
      <span className="col-span-2">实时速度</span>
      <span>xx</span>
      <span>平层</span>
    </Panel>
  );
}

function DataTable({ rows, first, cols }) {
  return (
    <table className={`w-full table-fixed border-separate border-spacing-0 border-l border-[#dcdcdc] bg-white font-normal ${UI}`}>
      <colgroup>
        <col className={first} />
        <col className={cols} />
        <col className={cols} />
        <col />
      </colgroup>
      <thead>
        <tr>
          {["检测部位", "正常值", "实际值", "状态"].map((h) => (
            <th key={h} className="h-[29px] border-r border-[#e2e2e2] p-0 pt-px pl-[5px] text-left leading-[20px] font-normal first:pl-1 last:border-r-0">
              {h}
            </th>
          ))}
        </tr>
      </thead>
      <tbody>
        {rows.map((r, i) => (
          <tr key={i}>
            {r.map((c, j) => (
              <td
                key={j}
                className="h-[37px] border-r border-b border-[#d6d6d6] p-0 pl-[3px] leading-[20px] first:pl-0 first:text-center first:text-[#ff0000] last:border-r-0"
              >
                {c}
              </td>
            ))}
          </tr>
        ))}
      </tbody>
    </table>
  );
}

const ROPE_ROWS = Array.from({ length: 20 }, () => ["xx", "xx", "xx", "xx"]);
const ACTUAL = ["3", "-66", "8", "7"];
const CHANNEL_ROWS = Array.from({ length: 19 }, (_, i) => [`通道${i + 1}`, "xx", ACTUAL[i] || "xx", "xx"]);

function RopePanel() {
  return (
    <Panel className="mt-1 flex flex-col border-b-0 pr-[7px] pl-[11px]">
      <div className="grid h-[47px] grid-cols-[196px_1fr] items-center pt-1 pl-[41px] leading-[20px]">
        <span>钢丝绳检测状况</span>
        <span>正常</span>
      </div>
      <div className="flex flex-1 flex-col border border-b-0 border-[#7f8590] bg-white">
        <DataTable rows={ROPE_ROWS} first="w-[94px]" cols="w-[95px]" />
        <div className="mx-px mt-auto h-[19px] bg-[#f0f0f0]" />
      </div>
    </Panel>
  );
}

function ChannelPanel() {
  return (
    <Panel className="mt-1 flex flex-col border-b-0 pt-[11px] pr-[17px] pl-[11px]">
      <div className="border border-[#7f8087] bg-white pr-px pb-px">
        <div className="bg-[#f0f0f0] pr-[20px] pb-[19px]">
          <div className="h-[728px] overflow-hidden">
            <DataTable rows={CHANNEL_ROWS} first="w-[116px]" cols="w-[117px]" />
          </div>
        </div>
      </div>
      <dl className="grid grid-cols-[224px_86px_86px_1fr] gap-y-[43px] pt-[6px] leading-[20px] whitespace-nowrap">
        <dt>角度x</dt>
        <dd>0.780度</dd>
        <dt>加速度z</dt>
        <dd>1.0107g</dd>
        <dt>角度y</dt>
        <dd>1.038度</dd>
        <dt>制动距离</dt>
        <dd>xx</dd>
      </dl>
    </Panel>
  );
}

function AppWindow() {
  return (
    <main className="absolute top-[57px] right-[174px] bottom-[58px] left-[94px] z-10 flex flex-col border border-[#1a7fd0] bg-[#f0f0f0] text-[15px] text-black shadow-[0_0_20px_rgba(0,0,0,0.45)]">
      <header className={`flex h-[37px] shrink-0 items-center bg-white pb-0.5 pl-[9px] ${UI}`}>
        <AppWindowIcon w={19} h={15} />
        <h1 className="ml-[6px] text-[15px] leading-[20px]">电梯测控系统(客户端)-曳引式升降机</h1>
        <div className="ml-auto flex">
          <button type="button" aria-label="最小化" className="flex w-[58px] items-center justify-center">
            <svg width="13" height="13" viewBox="0 0 13 13"><path d="M0 6.500h13" stroke="#000" /></svg>
          </button>
          <button type="button" aria-label="最大化" className="flex w-[58px] items-center justify-center">
            <svg width="13" height="13" viewBox="0 0 13 13"><path d="M0.500 0.500h12v12h-12z" fill="none" stroke="#ccc" /></svg>
          </button>
          <button type="button" aria-label="关闭" className="flex w-[60px] items-center justify-center">
            <svg width="13" height="13" viewBox="0 0 13 13"><path d="M0.500 0.500l12 12M12.500 0.500l-12 12" stroke="#000" /></svg>
          </button>
        </div>
      </header>
      <nav className={`relative flex h-[25px] shrink-0 bg-white ${UI}`}>
        <button type="button" className="w-[46px] border border-[#99d1ff] bg-[#cce8ff] leading-[22px]">编辑</button>
        <button type="button" className="w-[76px] leading-[22px]">动画投放</button>
        <div className="absolute top-[25px] left-0 z-10 flex w-[155px] flex-col border border-[#ccc] bg-[#f0f0f0] py-[2px] shadow-[4px_4px_3px_-1px_rgba(0,0,0,0.5)]">
          <button type="button" className="h-[24px] pl-[36px] text-left leading-[24px]">配置编码器</button>
          <button type="button" className="h-[24px] pl-[36px] text-left leading-[24px]">配置CAN模块</button>
        </div>
      </nav>
      <div className={`grid min-h-0 flex-1 grid-cols-[300fr_400fr_400fr_500fr] gap-[7px] overflow-hidden pt-[2px] pr-[14px] pl-[15px] leading-[20px] ${SONG}`}>
        <div className="grid grid-rows-[449px_1fr] gap-[8px]">
          <ControlPanel />
          <ManualPanel />
        </div>
        <div className="grid grid-rows-[449px_1fr] gap-[8px]">
          <ElectricPanel />
          <RunPanel />
        </div>
        <RopePanel />
        <ChannelPanel />
      </div>
    </main>
  );
}

export default function App() {
  return (
    <div className="relative h-screen overflow-hidden bg-[#001330] bg-[radial-gradient(ellipse_300px_500px_at_1860px_180px,#00264d,transparent),radial-gradient(ellipse_500px_300px_at_1000px_20px,#00244a,transparent),linear-gradient(180deg,#00132f_0%,#001f40_12%,#00193a_35%,#00112b_52%,#001c3c_66%,#000f26_80%,#000c20_100%)]">
      <DesktopIcons />
      <TopShortcuts />
      <ExplorerWindow />
      <AppWindow />
      <Taskbar />
    </div>
  );
}
